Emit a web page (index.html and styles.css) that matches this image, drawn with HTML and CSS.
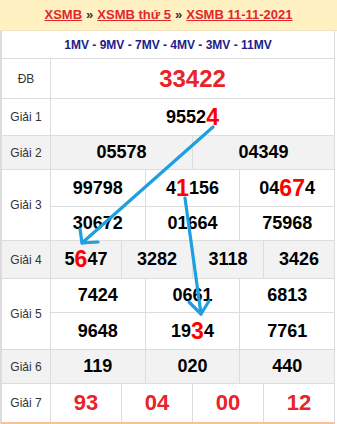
FILE: index.html
```html
<!DOCTYPE html>
<html lang="vi">
<head>
<meta charset="utf-8">
<title>XSMB 11-11-2021</title>
<link rel="stylesheet" href="styles.css">
</head>
<body>
<div class="page">
  <div class="head"><a href="#">XSMB</a><span class="sep">»</span><a href="#">XSMB thứ 5</a><span class="sep">»</span><a href="#">XSMB 11-11-2021</a></div>
  <div class="board">
    <div class="codes">1MV - 9MV - 7MV - 4MV - 3MV - 11MV</div>

    <div class="row r-db">
      <div class="lbl">ĐB</div>
      <div class="cells cols1"><div class="cell db">33422</div></div>
    </div>

    <div class="row r-g1">
      <div class="lbl">Giải 1</div>
      <div class="cells cols1"><div class="cell">9552<span class="hl">4</span></div></div>
    </div>

    <div class="row r-g2 gray">
      <div class="lbl">Giải 2</div>
      <div class="cells cols2"><div class="cell">05578</div><div class="cell">04349</div></div>
    </div>

    <div class="row r-g3">
      <div class="lbl">Giải 3</div>
      <div class="cells cols3 two-a">
        <div class="cell">99798</div><div class="cell">4<span class="hl">1</span>156</div><div class="cell">04<span class="hl">67</span>4</div>
        <div class="cell sub">30672</div><div class="cell sub">01664</div><div class="cell sub">75968</div>
      </div>
    </div>

    <div class="row r-g4 gray">
      <div class="lbl">Giải 4</div>
      <div class="cells cols4"><div class="cell">5<span class="hl">6</span>47</div><div class="cell">3282</div><div class="cell">3118</div><div class="cell">3426</div></div>
    </div>

    <div class="row r-g5">
      <div class="lbl">Giải 5</div>
      <div class="cells cols3 two-b">
        <div class="cell">7424</div><div class="cell">0661</div><div class="cell">6813</div>
        <div class="cell sub">9648</div><div class="cell sub">19<span class="hl">3</span>4</div><div class="cell sub">7761</div>
      </div>
    </div>

    <div class="row r-g6 gray">
      <div class="lbl">Giải 6</div>
      <div class="cells cols3"><div class="cell">119</div><div class="cell">020</div><div class="cell">440</div></div>
    </div>

    <div class="row r-g7">
      <div class="lbl">Giải 7</div>
      <div class="cells cols4"><div class="cell g7">93</div><div class="cell g7">04</div><div class="cell g7">00</div><div class="cell g7">12</div></div>
    </div>
  </div>

  <svg class="arrows" width="337" height="424" viewBox="0 0 337 424">
    <g fill="none" stroke="#1d9fe0" stroke-width="3.2" stroke-linecap="round" stroke-linejoin="round">
      <path d="M213 127 L82 243"/>
      <path d="M80 229 L82 243 L98 242"/>
      <path d="M185 198 L201 314"/>
      <path d="M189 302 L201 314 L209 301"/>
    </g>
  </svg>
</div>
</body>
</html>
```

FILE: styles.css
```css
* {
  box-sizing: border-box;
  margin: 0;
  padding: 0;
}

body {
  margin: 0;
  background: #ffffff;
  font-family: "Liberation Sans", Arial, sans-serif;
}

.page {
  position: relative;
  width: 337px;
  height: 424px;
  overflow: hidden;
}

.head {
  height: 31px;
  background: #fff1c2;
  border-bottom: 1px solid #f1e4c3;
  display: flex;
  align-items: center;
  justify-content: center;
  font-size: 13px;
  font-weight: bold;
  color: #333333;
  padding-bottom: 1px;
}

.head a {
  color: #e4262c;
  text-decoration: underline;
}

.sep {
  margin: 0 4px;
  color: #333333;
}

.board {
  width: 335px;
  border-left: 2px solid #dcdcdc;
  border-right: 1px solid #dcdcdc;
  border-bottom: 2px solid #f6c48e;
}

.codes {
  height: 28px;
  border-bottom: 1px solid #dddddd;
  display: flex;
  align-items: center;
  justify-content: center;
  font-size: 12px;
  font-weight: bold;
  color: #1c1c8a;
}

.row {
  display: flex;
  border-bottom: 1px solid #dddddd;
}

.row.gray {
  background: #f2f2f2;
}

.r-db { height: 40px; }
.r-g1 { height: 37px; }
.r-g2 { height: 34px; }
.r-g3 { height: 71px; }
.r-g4 { height: 38px; }
.r-g5 { height: 71px; }
.r-g6 { height: 34px; }
.r-g7 { height: 38px; border-bottom: none; }

.lbl {
  width: 48px;
  flex: none;
  display: flex;
  align-items: center;
  justify-content: center;
  font-size: 12px;
  color: #333333;
}

.cells {
  flex: 1;
  display: grid;
}

.cols1 { grid-template-columns: 1fr; }
.cols2 { grid-template-columns: 1fr 1fr; }
.cols3 { grid-template-columns: 1fr 1fr 1fr; }
.cols4 { grid-template-columns: 1fr 1fr 1fr 1fr; }

.two-a { grid-template-rows: 36px 34px; }
.two-b { grid-template-rows: 33px 37px; }

.cell {
  border-left: 1px solid #dddddd;
  display: flex;
  align-items: center;
  justify-content: center;
  font-size: 18px;
  font-weight: bold;
  color: #000000;
  white-space: nowrap;
}

.cell.sub {
  border-top: 1px solid #dddddd;
}

.cell.db {
  font-size: 24px;
  color: #ea2229;
}

.cell.g7 {
  font-size: 22px;
  color: #ea2229;
}

.hl {
  font-size: 23px;
  color: #ff0000;
  line-height: 1;
}

.arrows {
  position: absolute;
  left: 0;
  top: 0;
  pointer-events: none;
}
```
